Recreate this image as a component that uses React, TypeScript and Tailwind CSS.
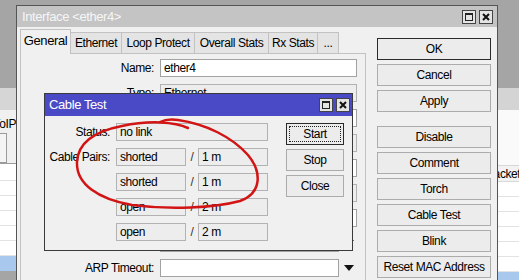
import React from 'react';

const font = { fontFamily: '"Liberation Sans", Arial, sans-serif' };

const WinButtons = () => (
  <div className="flex gap-[3px]">
    <div className="w-[14px] h-[14px] bg-[#e4e4e4] border border-[#444] flex items-center justify-center">
      <div className="w-[8px] h-[8px] border border-[#222] border-t-2" />
    </div>
    <div className="w-[14px] h-[14px] bg-[#e4e4e4] border border-[#444] flex items-center justify-center">
      <svg width="8" height="8" viewBox="0 0 8 8">
        <path d="M1 1 L7 7 M7 1 L1 7" stroke="#111" strokeWidth="2" />
      </svg>
    </div>
  </div>
);

const Btn = ({ label, main = false, focus = false, w = 'w-[114px]' }: { label: string; main?: boolean; focus?: boolean; w?: string }) => (
  <div
    className={`${w} h-[22px] shrink-0 relative flex items-center justify-center bg-[#ececec] border text-black whitespace-nowrap ${
      main ? 'border-[#2a2a2a]' : 'border-[#acacac]'
    }`}
  >
    {focus && <div className="absolute inset-[2px] border border-dotted border-[#222]" />}
    {label}
  </div>
);

const Field = ({ value = '', w, ro = false }: { value?: string; w: string; ro?: boolean }) => (
  <div
    className={`${w} h-[18px] border flex items-center pl-[3px] text-black whitespace-nowrap overflow-hidden ${
      ro ? 'bg-[#ededed] border-[#b2b2b2]' : 'bg-white border-[#a2a2a2]'
    }`}
  >
    {value}
  </div>
);

const ifaceRows: { label: string; value: string; ro?: boolean; drop?: boolean }[] = [
  { label: 'Name:', value: 'ether4' },
  { label: 'Type:', value: 'Ethernet', ro: true },
  { label: 'MTU:', value: '1500' },
  { label: 'Actual MTU:', value: '1500', ro: true },
  { label: 'L2 MTU:', value: '1598' },
  { label: 'Max L2 MTU:', value: '2028', ro: true },
  { label: 'MAC Address:', value: '4C:5E:0C:11:22:33' },
  { label: 'ARP:', value: 'enabled', drop: true },
  { label: 'ARP Timeout:', value: '', drop: true },
];

const tabs = [
  { label: 'Ethernet', w: 'w-[51px]' },
  { label: 'Loop Protect', w: 'w-[73px]' },
  { label: 'Overall Stats', w: 'w-[74px]' },
  { label: 'Rx Stats', w: 'w-[49px]' },
  { label: '...', w: 'w-[21px]' },
];

const sideButtons = ['Disable', 'Comment', 'Torch', 'Cable Test', 'Blink', 'Reset MAC Address', 'Monitor Traffic'];

const App = () => {
  return (
    <div
      className="relative w-[519px] h-[280px] overflow-hidden bg-[#a5a5a5] flex justify-between text-[12px] leading-[16px] tracking-[-0.4px]"
      style={font}
    >
      {/* list window behind, left edge */}
      <div className="w-[16px] flex flex-col overflow-hidden">
        <div className="h-[88px] shrink-0" />
        <div className="h-[22px] shrink-0 bg-[#d6d6d6]" />
        <div className="h-[53px] shrink-0 bg-[#f0f0f0] flex flex-col">
          <div className="h-[16px] mt-[6px] text-black whitespace-nowrap flex justify-end">VoIP</div>
          <div className="ml-[-12px] w-[19px] h-[30px] mt-[1px] border border-[#9a9a9a] bg-[#f4f4f4]" />
        </div>
        <div className="border-t border-[#9c9c9c] flex flex-col bg-white">
          <div className="h-[17px] shrink-0 border-b border-[#e2e2e2]" />
          {[0, 1, 2, 3, 4].map((i) => (
            <div key={i} className="h-[15px] shrink-0 border-b border-[#e2e2e2]" />
          ))}
          <div className="h-[15px] shrink-0 bg-[#a9c8ee]" />
        </div>
      </div>

      {/* list window behind, right edge */}
      <div className="w-[21px] flex flex-col overflow-hidden">
        <div className="h-[88px] shrink-0" />
        <div className="h-[22px] shrink-0 bg-[#d4d4d4]" />
        <div className="h-[55px] shrink-0 bg-[#fafafa]" />
        <div className="h-[17px] shrink-0 bg-[#f2f2f2] border-y border-[#d8d8d8] text-black whitespace-nowrap ml-[-12px]">
          Packet
        </div>
        {[0, 1, 2, 3, 4, 5].map((i) => (
          <div key={i} className="h-[15px] shrink-0 bg-white border-b border-[#e2e2e2]" />
        ))}
        <div className="h-[15px] shrink-0 bg-[#a9c8ee]" />
      </div>

      {/* Interface window */}
      <div className="absolute left-[16px] top-[5px] w-[482px] h-[290px] border border-[#555] bg-[#f0f0f0] flex flex-col">
        <div className="h-[21px] shrink-0 bg-[#c4c4c4] flex items-center justify-between pl-[5px] pr-[4px]">
          <span className="text-[13px] text-[#f6f6f6]">Interface &lt;ether4&gt;</span>
          <WinButtons />
        </div>
        <div className="flex flex-1">
          <div className="w-[346px] ml-[3px] flex flex-col">
            <div className="h-[26px] shrink-0 flex items-end">
              <div className="w-[51px] h-[25px] border border-b-0 border-[#c2c2c2] bg-[#f0f0f0] flex items-center justify-center text-[13px] text-black relative z-10 -mb-px pb-[2px]">
                General
              </div>
              {tabs.map((t) => (
                <div
                  key={t.label}
                  className={`${t.w} h-[21px] border border-l-0 border-b-0 border-[#c2c2c2] bg-[#e4e4e4] flex items-center justify-center text-black whitespace-nowrap`}
                >
                  {t.label}
                </div>
              ))}
            </div>
            <div className="flex-1 border border-[#c2c2c2] flex flex-col gap-[7px] pt-[5px]">
              {ifaceRows.map((r) => (
                <div key={r.label} className="h-[18px] flex items-center gap-[6px]">
                  <div className="w-[133px] text-right text-black whitespace-nowrap">{r.label}</div>
                  {r.drop ? (
                    <div className="flex items-center gap-[5px]">
                      <Field value={r.value} w="w-[179px]" ro={r.ro} />
                      <svg width="10" height="6" viewBox="0 0 10 6">
                        <path d="M0 0 H10 L5 6 Z" fill="#111" />
                      </svg>
                    </div>
                  ) : (
                    <Field value={r.value} w="w-[197px]" ro={r.ro} />
                  )}
                </div>
              ))}
            </div>
          </div>
          <div className="ml-[11px] pt-[11px] flex flex-col gap-[4px]">
            <Btn label="OK" main />
            <Btn label="Cancel" />
            <Btn label="Apply" />
            <div className="h-[6px] shrink-0" />
            {sideButtons.map((b) => (
              <Btn key={b} label={b} />
            ))}
          </div>
        </div>
      </div>

      {/* Cable Test window */}
      <div className="absolute left-[44px] top-[93px] w-[309px] h-[158px] border border-[#3a3a3a] bg-[#f0f0f0] flex flex-col">
        <div className="h-[22px] shrink-0 bg-[#4a4ac6] flex items-center justify-between pl-[4px] pr-[2px]">
          <span className="text-[13px] text-white">Cable Test</span>
          <WinButtons />
        </div>
        <div className="flex pt-[7px]">
          <div className="flex flex-col gap-[7px]">
            <div className="h-[18px] flex items-center gap-[6px]">
              <div className="w-[65px] text-right text-black whitespace-nowrap">Status:</div>
              <Field value="no link" w="w-[152px]" ro />
            </div>
            {[
              ['Cable Pairs:', 'shorted', '1 m'],
              ['', 'shorted', '1 m'],
              ['', 'open', '2 m'],
              ['', 'open', '2 m'],
            ].map(([l, a, b], i) => (
              <div key={i} className="h-[18px] flex items-center gap-[6px]">
                <div className="w-[65px] text-right text-black whitespace-nowrap">{l}</div>
                <div className="flex items-center">
                  <Field value={a} w="w-[70px]" ro />
                  <div className="w-[12px] text-center text-[#333]">/</div>
                  <Field value={b} w="w-[70px]" ro />
                </div>
              </div>
            ))}
          </div>
          <div className="ml-[18px] flex flex-col gap-[4px]">
            <Btn label="Start" main focus w="w-[58px]" />
            <Btn label="Stop" w="w-[58px]" />
            <Btn label="Close" w="w-[58px]" />
          </div>
        </div>
      </div>

      {/* red marker drawn over the screenshot */}
      <svg className="absolute left-0 top-0 pointer-events-none" width="519" height="280" viewBox="0 0 519 280">
        <path
          d="M188 128 C 175 122, 150 120, 122 126 C 96 131, 78 142, 77 162 C 76 184, 98 199, 132 205 C 170 210, 214 208, 240 201 C 262 193, 262 172, 248 155 C 232 137, 206 124, 178 120 C 170 119, 164 120, 160 122"
          fill="none"
          stroke="#d21414"
          strokeWidth="2.5"
          strokeLinecap="round"
        />
      </svg>
    </div>
  );
};

export default App;
